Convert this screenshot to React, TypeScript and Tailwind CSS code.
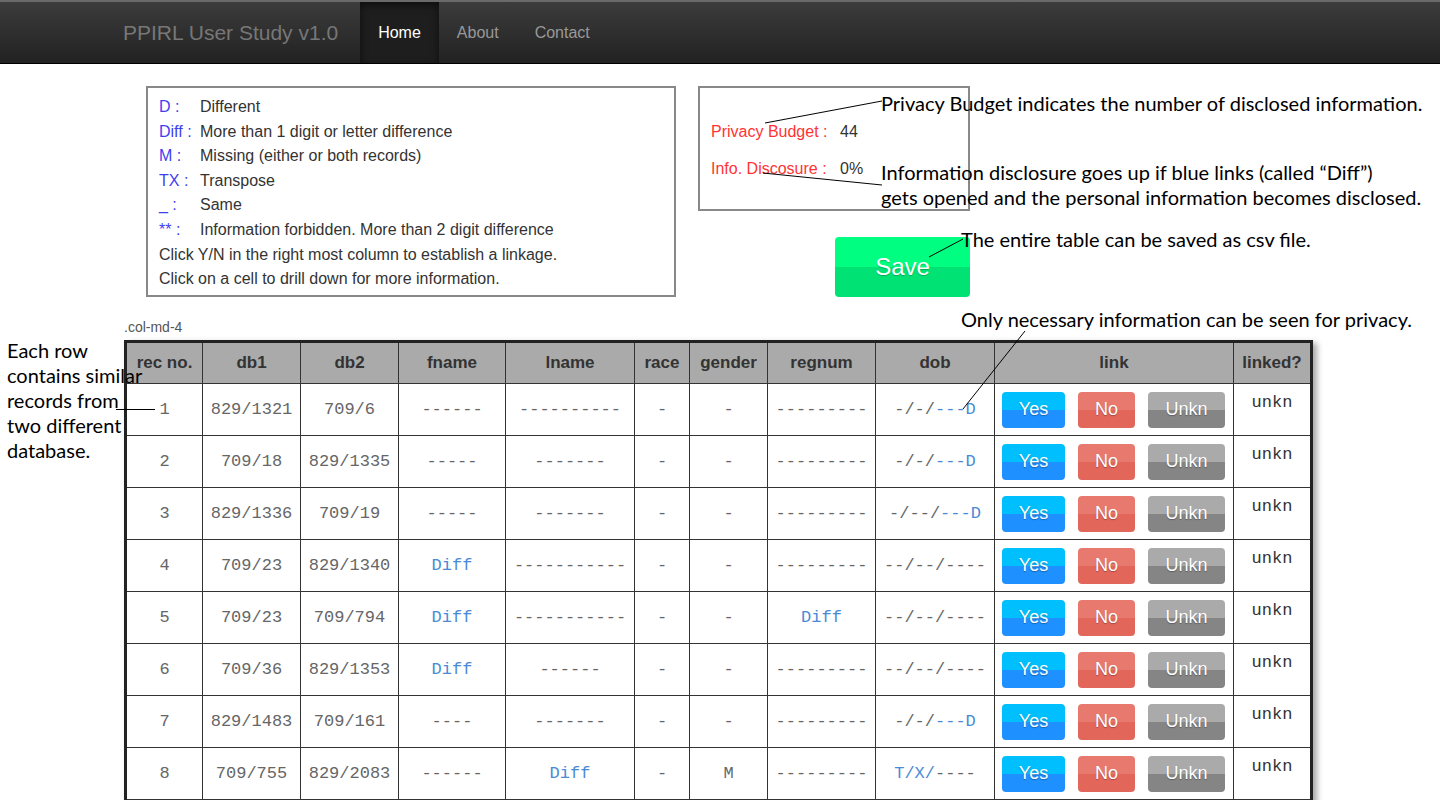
import React from "react";

type Seg = { t: string; blue?: boolean };
type Row = { no: number; db1: string; db2: string; cells: (string | Seg[])[] };

const B = (t: string): Seg[] => [{ t, blue: true }];

const ROWS: Row[] = [
  { no: 1, db1: "829/1321", db2: "709/6", cells: ["------", "----------", "-", "-", "---------", [{ t: "-/-/" }, { t: "---D", blue: true }]] },
  { no: 2, db1: "709/18", db2: "829/1335", cells: ["-----", "-------", "-", "-", "---------", [{ t: "-/-/" }, { t: "---D", blue: true }]] },
  { no: 3, db1: "829/1336", db2: "709/19", cells: ["-----", "-------", "-", "-", "---------", [{ t: "-/--/" }, { t: "---D", blue: true }]] },
  { no: 4, db1: "709/23", db2: "829/1340", cells: [B("Diff"), "-----------", "-", "-", "---------", "--/--/----"] },
  { no: 5, db1: "709/23", db2: "709/794", cells: [B("Diff"), "-----------", "-", "-", B("Diff"), "--/--/----"] },
  { no: 6, db1: "709/36", db2: "829/1353", cells: [B("Diff"), "------", "-", "-", "---------", "--/--/----"] },
  { no: 7, db1: "829/1483", db2: "709/161", cells: ["----", "-------", "-", "-", "---------", [{ t: "-/-/" }, { t: "---D", blue: true }]] },
  { no: 8, db1: "709/755", db2: "829/2083", cells: ["------", B("Diff"), "-", "M", "---------", [{ t: "T/X/", blue: true }, { t: "----" }]] },
  { no: 9, db1: "709/812", db2: "829/2101", cells: ["-----", "--------", "-", "-", "---------", "--/--/----"] },
];

const HEAD = [
  ["rec no.", "w-[77px]"],
  ["db1", "w-[98px]"],
  ["db2", "w-[98px]"],
  ["fname", "w-[107px]"],
  ["lname", "w-[129px]"],
  ["race", "w-[55px]"],
  ["gender", "w-[78px]"],
  ["regnum", "w-[108px]"],
  ["dob", "w-[119px]"],
  ["link", "w-[239px]"],
  ["linked?", "w-[78px]"],
];

const LEGEND: [string, string][] = [
  ["D :", "Different"],
  ["Diff :", "More than 1 digit or letter difference"],
  ["M :", "Missing (either or both records)"],
  ["TX :", "Transpose"],
  ["_ :", "Same"],
  ["** :", "Information forbidden. More than 2 digit difference"],
];

const cellCls = "border border-[#333] text-center align-middle font-['Liberation_Mono','Courier_New',monospace] text-[17px] text-[#666]";
const btnCls = "flex h-[36px] items-center justify-center rounded-[4px] text-[18px] text-white [text-shadow:0_1px_1px_rgba(0,0,0,0.3)]";
const noteCls = "absolute whitespace-nowrap font-['Lato',sans-serif] text-[20px] leading-[25px] text-black";

function Cell({ v }: { v: string | Seg[] }) {
  if (typeof v === "string") return <>{v}</>;
  return (
    <>
      {v.map((s, i) => (
        <span key={i} className={s.blue ? "text-[#4a8ad6]" : ""}>{s.t}</span>
      ))}
    </>
  );
}

export default function App() {
  return (
    <div className="relative min-h-screen bg-white font-['Liberation_Sans',Arial,sans-serif]">
      {/* navbar */}
      <nav className="h-16 border-t-2 border-b border-t-[#6a6a6a] border-b-black bg-gradient-to-b from-[#3c3c3c] to-[#222]">
        <div className="flex h-full items-center pl-[123px]">
          <span className="mr-[22px] text-[21px] text-[#777]">PPIRL User Study v1.0</span>
          <a className="flex h-full items-center bg-[#1e1e1e] px-[18px] text-[16px] text-white shadow-[inset_0_3px_9px_rgba(0,0,0,0.55)]">Home</a>
          <a className="px-[18px] text-[16px] text-[#999]">About</a>
          <a className="px-[18px] text-[16px] text-[#999]">Contact</a>
        </div>
      </nav>

      <main className="pl-[124px]">
        <div className="flex pl-[22px] pt-[22px]">
          {/* legend */}
          <div className="h-[211px] w-[530px] border-2 border-[#888] pl-[11px] pt-[7px] text-[16px] leading-[24.6px] text-[#333]">
            {LEGEND.map(([k, v]) => (
              <div key={k} className="flex">
                <span className="w-[41px] shrink-0 text-[#3f3ff0]">{k}</span>
                <span>{v}</span>
              </div>
            ))}
            <div>Click Y/N in the right most column to establish a linkage.</div>
            <div>Click on a cell to drill down for more information.</div>
          </div>

          {/* privacy + save */}
          <div className="ml-[22px] flex w-[272px] flex-col items-end">
            <div className="h-[125px] w-full border-2 border-[#888] pl-[11px] pt-[35px] text-[16px] leading-[18px]">
              <div className="flex">
                <span className="w-[129px] text-[#ff3333]">Privacy Budget :</span>
                <span className="text-[#333]">44</span>
              </div>
              <div className="mt-[19px] flex">
                <span className="w-[129px] text-[#ff3333]">Info. Discosure :</span>
                <span className="text-[#333]">0%</span>
              </div>
            </div>
            <button className="mt-[26px] flex h-[60px] w-[135px] items-center justify-center rounded-[4px] bg-[linear-gradient(to_bottom,#00ff80_50%,#00e374_50%)] text-[24px] text-white [text-shadow:0_1px_1px_rgba(0,0,0,0.25)]">
              Save
            </button>
          </div>
        </div>

        <div className="mt-[22px] text-[14px] leading-[16px] text-[#555]">.col-md-4</div>

        <table className="mt-[5px] table-fixed border-collapse border-[3px] border-[#222] shadow-[4px_3px_6px_rgba(0,0,0,0.35)]">
          <thead>
            <tr className="h-[42px] bg-[#aaa]">
              {HEAD.map(([h, w]) => (
                <th key={h} className={`${w} border border-[#333] text-center text-[17px] font-bold text-[#333]`}>{h}</th>
              ))}
            </tr>
          </thead>
          <tbody>
            {ROWS.map((r) => (
              <tr key={r.no} className="h-[52px]">
                <td className={cellCls}>{r.no}</td>
                <td className={cellCls}>{r.db1}</td>
                <td className={cellCls}>{r.db2}</td>
                {r.cells.map((c, i) => (
                  <td key={i} className={cellCls}><Cell v={c} /></td>
                ))}
                <td className="border border-[#333] px-[7px] align-middle">
                  <div className="flex gap-[13px]">
                    <span className={`${btnCls} w-[63px] bg-[linear-gradient(to_bottom,#00bfff_50%,#1e90ff_50%)]`}>Yes</span>
                    <span className={`${btnCls} w-[57px] bg-[linear-gradient(to_bottom,#e8796f_50%,#e3665b_50%)]`}>No</span>
                    <span className={`${btnCls} w-[77px] bg-[linear-gradient(to_bottom,#aaa_50%,#858585_50%)]`}>Unkn</span>
                  </div>
                </td>
                <td className="border border-[#333] pt-[9px] text-center align-top font-['Liberation_Mono','Courier_New',monospace] text-[17px] leading-[20px] text-[#333]">unkn</td>
              </tr>
            ))}
          </tbody>
        </table>
      </main>

      {/* annotations */}
      <div className={`${noteCls} left-[881px] top-[91px]`}>Privacy Budget indicates the number of disclosed information.</div>
      <div className={`${noteCls} left-[881px] top-[160px]`}>
        Information disclosure goes up if blue links (called “Diff”)
        <br />
        gets opened and the personal information becomes disclosed.
      </div>
      <div className={`${noteCls} left-[961px] top-[227px]`}>The entire table can be saved as csv file.</div>
      <div className={`${noteCls} left-[961px] top-[307px]`}>Only necessary information can be seen for privacy.</div>
      <div className={`${noteCls} left-[7px] top-[338px]`}>
        Each row
        <br />
        contains similar
        <br />
        records from
        <br />
        two different
        <br />
        database.
      </div>

      <svg className="pointer-events-none absolute left-0 top-0" width="1440" height="800">
        <g stroke="#000" strokeWidth="1">
          <line x1="765" y1="123" x2="882" y2="101" />
          <line x1="763" y1="173" x2="882" y2="185" />
          <line x1="929" y1="257" x2="963" y2="239" />
          <line x1="1025" y1="331" x2="963" y2="409" />
          <line x1="116" y1="409.5" x2="155" y2="409.5" />
        </g>
      </svg>
    </div>
  );
}
